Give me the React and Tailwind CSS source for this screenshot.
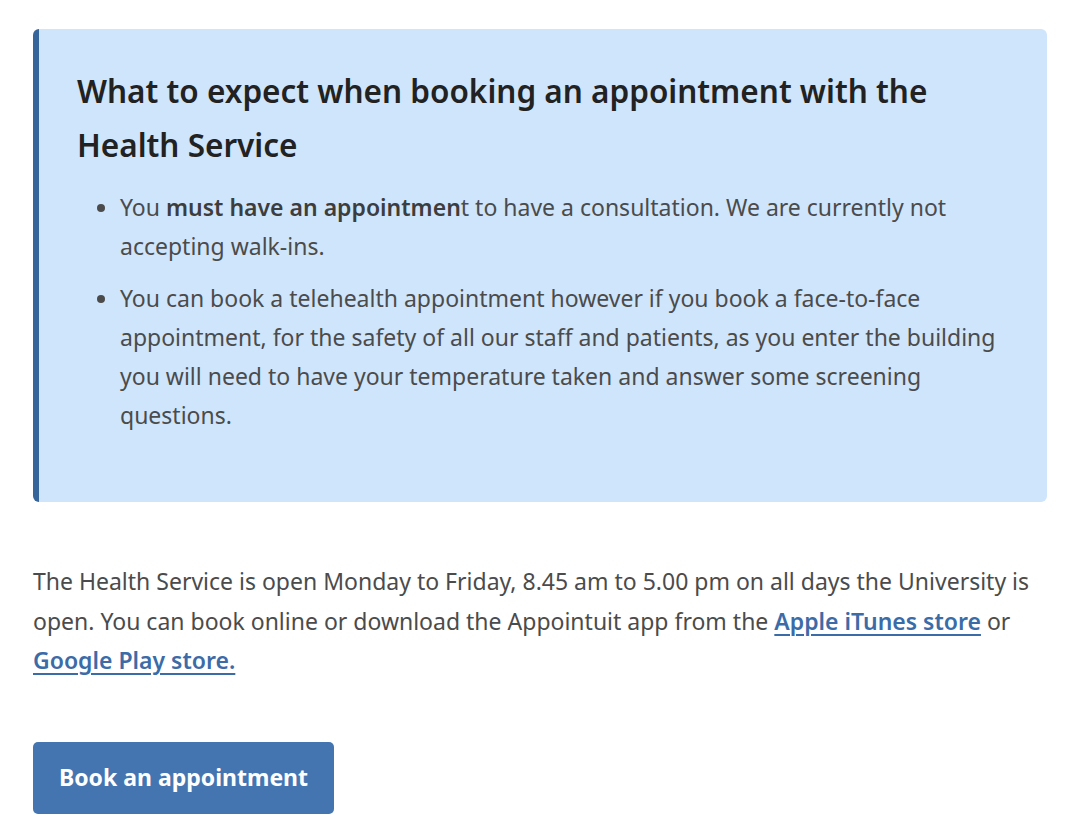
export default function App() {
  return (
    <div className="min-h-screen bg-white px-[33px] pt-[29px] font-['Noto_Sans',sans-serif] text-[23px] leading-[39px] text-[#4b4b4b]">
      {/* info callout */}
      <div className="rounded-md border-l-[6px] border-[#36659b] bg-[#cfe5fc] pt-[35px] pb-[67px] pl-[38px] pr-[38px]">
        <h2 className="text-[31.5px] leading-[54px] font-semibold text-[#222222]">
          What to expect when booking an appointment with the Health Service
        </h2>
        <ul className="mt-[16px] list-disc pl-[43px] marker:text-[#4b4b4b]">
          <li>
            You <strong className="font-semibold text-[#3d3d3d]">must have an appointmen</strong>t to have a consultation. We are
            currently not accepting walk-ins.
          </li>
          <li className="mt-[13px]">
            You can book a telehealth appointment however if you book a face-to-face appointment, for the safety of all our
            staff and patients, as you enter the building you will need to have your temperature taken and answer some
            screening questions.
          </li>
        </ul>
      </div>

      <p className="mt-[60px] leading-[39.5px]">
        The Health Service is open Monday to Friday, 8.45 am to 5.00 pm on all days the University is open. You can book
        online or download the Appointuit app from the{' '}
        <a href="#" className="font-semibold text-[#3c6ca8] underline decoration-2 underline-offset-4">
          Apple iTunes store
        </a>{' '}
        or{' '}
        <a href="#" className="font-semibold text-[#3c6ca8] underline decoration-2 underline-offset-4">
          Google Play store.
        </a>
      </p>

      <button
        type="button"
        className="mt-[61px] h-[72px] w-[301px] rounded-[5px] bg-[#4475b0] text-[23px] font-bold text-white"
      >
        Book an appointment
      </button>
    </div>
  );
}
